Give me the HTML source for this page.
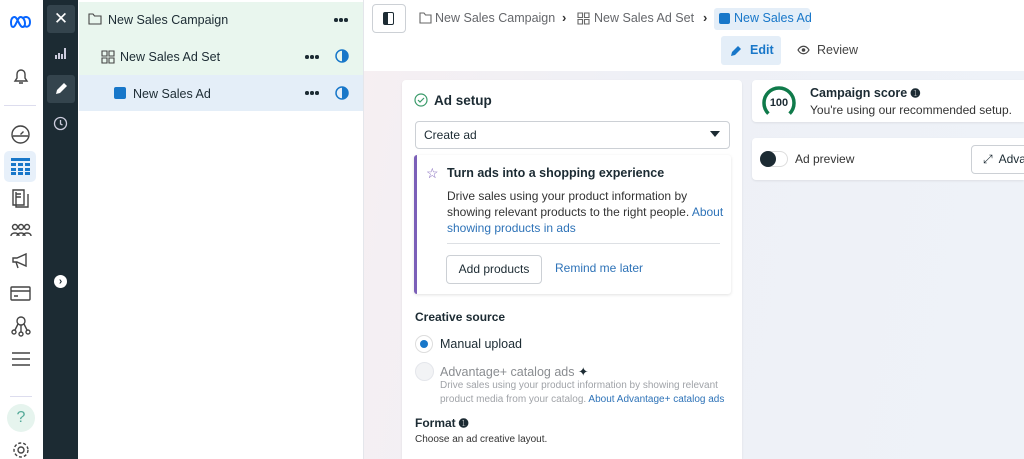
<!DOCTYPE html>
<html><head><meta charset="utf-8"><style>
*{box-sizing:border-box;margin:0;padding:0}
body{width:1024px;height:459px;overflow:hidden;font-family:"Liberation Sans",sans-serif;color:#1c2b33;background:#fff;position:relative;font-size:12px}
.abs{position:absolute}
.rail{left:0;top:0;width:43px;height:459px;background:#fff}
.dark{left:43px;top:0;width:35px;height:459px;background:#1c2b33}
.tree{left:78px;top:0;width:286px;height:459px;background:#fff;border-right:1px solid #e4e6eb}
.main{left:364px;top:0;width:660px;height:459px;background:linear-gradient(100deg,#f6eff2 0%,#eef0f6 40%,#eef2f8 100%)}
.hdr{left:364px;top:0;width:660px;height:71px;background:#fff}
.card{background:#fff;border-radius:4px;box-shadow:0 1px 2px rgba(0,0,0,.08)}
.link{color:#2e73b8}
.ico{stroke:#444;fill:none;stroke-width:1.4}
.dots{position:absolute;width:14px;height:4px}
.dots i{position:absolute;top:0;width:3.5px;height:3.5px;border-radius:50%;background:#1c2b33}
</style></head><body>
<div class="abs rail"></div>
<svg class="abs" style="left:9px;top:16px" width="24" height="12" viewBox="0 0 24 12"><path d="M2 6c0-3 1.5-5 3.5-5 3 0 5 10 8 10 2 0 2.5-2 2.5-3.5C16 4 14 1 11.5 1 8.5 1 7 11 4 11 2.5 11 2 9 2 6z" fill="none" stroke="#0866ff" stroke-width="2"/><path d="M14 2c3-2 7-1 7 4s-4 6-6 3" fill="none" stroke="#0866ff" stroke-width="2"/></svg>
<svg class="abs ico" style="left:11px;top:66px" width="20" height="20" viewBox="0 0 20 20"><path class="ico" d="M4 15h12l-2-3V8a4 4 0 0 0-8 0v4zM8 17h4"/></svg>
<div class="abs" style="left:4px;top:105px;width:32px;height:1px;background:#dde"></div>
<svg class="abs" style="left:10px;top:124px" width="21" height="21" viewBox="0 0 21 21"><circle class="ico" cx="10.5" cy="10.5" r="8.5"/><path class="ico" d="M3 12h15M10.5 10.5l3-3"/></svg>
<div class="abs" style="left:4px;top:151px;width:32px;height:31px;background:#e7f0fa;border-radius:5px"></div>
<svg class="abs" style="left:11px;top:158px" width="19" height="17" viewBox="0 0 19 17"><rect x="0" y="0" width="19" height="3" fill="#1877c9"/><path d="M0 5h5v3H0zM7 5h5v3H7zM14 5h5v3h-5zM0 10h5v3H0zM7 10h5v3H7zM14 10h5v3h-5zM0 14h5v3H0zM7 14h5v3H7zM14 14h5v3h-5z" fill="#1877c9"/></svg>
<svg class="abs" style="left:11px;top:188px" width="20" height="20"><path class="ico" d="M2 2h11v15H2zM5 4v15h12V6M5 6h5M5 9h5"/></svg>
<svg class="abs" style="left:10px;top:222px" width="22" height="16"><circle class="ico" cx="5" cy="5" r="2.5"/><circle class="ico" cx="11" cy="5" r="2.5"/><circle class="ico" cx="17" cy="5" r="2.5"/><path class="ico" d="M1 14c0-4 8-4 8 0M7 14c0-4 8-4 8 0M13 14c0-4 8-4 8 0"/></svg>
<svg class="abs" style="left:11px;top:252px" width="20" height="18"><path class="ico" d="M2 6h4l9-4v12L6 10H2zM5 10l2 6"/></svg>
<svg class="abs" style="left:10px;top:286px" width="21" height="16"><rect class="ico" x="1" y="1" width="19" height="13" rx="1"/><path class="ico" d="M1 5h19M4 10h4"/></svg>
<svg class="abs" style="left:10px;top:315px" width="22" height="22"><circle class="ico" cx="11" cy="6" r="4"/><circle class="ico" cx="4" cy="17" r="2"/><circle class="ico" cx="11" cy="19" r="2"/><circle class="ico" cx="18" cy="17" r="2"/><path class="ico" d="M11 10v7M8 9l-3 6M14 9l3 6"/></svg>
<svg class="abs" style="left:12px;top:352px" width="18" height="14"><path class="ico" d="M0 1h18M0 7h18M0 13h18"/></svg>
<div class="abs" style="left:10px;top:396px;width:22px;height:1px;background:#dde"></div>
<div class="abs" style="left:7px;top:404px;width:28px;height:28px;border-radius:50%;background:#e6f4ee;color:#5a9;text-align:center;line-height:28px;font-size:16px">?</div>
<svg class="abs" style="left:12px;top:441px" width="18" height="18"><circle class="ico" cx="9" cy="9" r="3"/><circle class="ico" cx="9" cy="9" r="7" stroke-dasharray="3 2"/></svg>

<div class="abs dark"></div>
<div class="abs" style="left:47px;top:5px;width:28px;height:28px;background:#34444d;border-radius:3px;color:#fff;text-align:center;line-height:28px;font-size:17px">✕</div>
<svg class="abs" style="left:55px;top:47px" width="13" height="12"><path d="M0 12V8h2v4M3 12V6h2v6M6 12V7h2v5M9 12V1h2v11" fill="#ccd"/></svg>
<div class="abs" style="left:47px;top:75px;width:28px;height:28px;background:#34444d;border-radius:3px"></div>
<svg class="abs" style="left:54px;top:82px" width="14" height="14"><path d="M2 12l1-4 7-7 3 3-7 7z" fill="#fff"/></svg>
<svg class="abs" style="left:53px;top:116px" width="15" height="15"><circle cx="7.5" cy="7.5" r="6" stroke="#ccd" fill="none" stroke-width="1.3"/><path d="M7.5 4v4l2 1" stroke="#ccd" fill="none" stroke-width="1.3"/></svg>
<div class="abs" style="left:54px;top:275px;width:13px;height:13px;border-radius:50%;background:#fff;color:#1c2b33;font-size:10px;line-height:13px;text-align:center;font-weight:bold">›</div>

<div class="abs tree"></div>
<div class="abs" style="left:79px;top:2px;width:284px;height:73px;background:#e9f6ee"></div>
<div class="abs" style="left:79px;top:75px;width:284px;height:36px;background:#e4eef8"></div>
<svg class="abs" style="left:88px;top:13px" width="14" height="12"><path d="M1 1h4l1.5 2H13v8H1z" fill="none" stroke="#444" stroke-width="1.1"/></svg>
<div class="abs" style="left:108px;top:13px;font-size:12.5px">New Sales Campaign</div>
<div class="dots" style="left:334px;top:18px"><i style="left:0"></i><i style="left:5px"></i><i style="left:10px"></i></div>
<svg class="abs" style="left:101px;top:50px" width="14" height="14"><path d="M1 1h5v5H1zM8 1h5v5H8zM1 8h5v5H1zM8 8h5v5H8z" fill="none" stroke="#444" stroke-width="1.1"/></svg>
<div class="abs" style="left:120px;top:50px;font-size:12.5px">New Sales Ad Set</div>
<div class="dots" style="left:305px;top:55px"><i style="left:0"></i><i style="left:5px"></i><i style="left:10px"></i></div>
<svg class="abs" style="left:335px;top:49px" width="14" height="14"><circle cx="7" cy="7" r="6" fill="none" stroke="#1877c9" stroke-width="1.5"/><path d="M7 1a6 6 0 0 1 0 12z" fill="#1877c9"/></svg>
<div class="abs" style="left:114px;top:87px;width:12px;height:12px;background:#1877c9;border-radius:2px"></div>
<div class="abs" style="left:133px;top:87px;font-size:12.5px">New Sales Ad</div>
<div class="dots" style="left:305px;top:91px"><i style="left:0"></i><i style="left:5px"></i><i style="left:10px"></i></div>
<svg class="abs" style="left:335px;top:86px" width="14" height="14"><circle cx="7" cy="7" r="6" fill="none" stroke="#1877c9" stroke-width="1.5"/><path d="M7 1a6 6 0 0 1 0 12z" fill="#1877c9"/></svg>

<div class="abs main"></div>
<div class="abs hdr"></div>
<div class="abs" style="left:372px;top:4px;width:34px;height:29px;border:1px solid #ccd0d5;border-radius:4px;background:#fff"></div>
<div class="abs" style="left:383px;top:12px;width:11px;height:13px;border:1.5px solid #1c2b33;border-left:5px solid #1c2b33;border-radius:2px"></div>
<svg class="abs" style="left:419px;top:12px" width="13" height="12"><path d="M1 1h4l1.5 2H12v8H1z" fill="none" stroke="#666" stroke-width="1.1"/></svg>
<div class="abs" style="left:435px;top:11px;font-size:12.5px;color:#65676b;white-space:nowrap">New Sales Campaign</div>
<div class="abs" style="left:562px;top:10px;font-size:13px;font-weight:bold;color:#333">›</div>
<svg class="abs" style="left:577px;top:12px" width="13" height="13"><path d="M1 1h4.5v4.5H1zM7.5 1H12v4.5H7.5zM1 7.5h4.5V12H1zM7.5 7.5H12V12H7.5z" fill="none" stroke="#666" stroke-width="1.1"/></svg>
<div class="abs" style="left:594px;top:11px;font-size:12.5px;color:#65676b;white-space:nowrap">New Sales Ad Set</div>
<div class="abs" style="left:703px;top:10px;font-size:13px;font-weight:bold;color:#333">›</div>
<div class="abs" style="left:714px;top:8px;width:96px;height:22px;background:#e4eef8;border-radius:3px"></div>
<div class="abs" style="left:719px;top:13px;width:11px;height:11px;background:#1877c9;border-radius:2px"></div>
<div class="abs" style="left:734px;top:11px;font-size:12.5px;color:#1877c9;white-space:nowrap">New Sales Ad</div>
<div class="abs" style="left:721px;top:36px;width:60px;height:29px;background:#e4eef8;border-radius:3px"></div>
<svg class="abs" style="left:730px;top:44px" width="13" height="13"><path d="M1 12l1-4 6-6 3 3-6 6z" fill="#1877c9"/></svg>
<div class="abs" style="left:750px;top:43px;font-size:12.5px;color:#1877c9;font-weight:bold">Edit</div>
<svg class="abs" style="left:797px;top:45px" width="13" height="10"><path d="M1 5c3-5 8-5 11 0-3 5-8 5-11 0z" fill="none" stroke="#444" stroke-width="1.2"/><circle cx="6.5" cy="5" r="1.8" fill="#444"/></svg>
<div class="abs" style="left:817px;top:43px;font-size:12.5px;color:#444">Review</div>

<div class="abs card" style="left:402px;top:80px;width:340px;height:379px;border-radius:4px 4px 0 0"></div>
<svg class="abs" style="left:414px;top:93px" width="14" height="14"><circle cx="7" cy="7" r="6" fill="none" stroke="#3a9a6a" stroke-width="1.2"/><path d="M4 7l2 2 4-4" fill="none" stroke="#3a9a6a" stroke-width="1.2"/></svg>
<div class="abs" style="left:434px;top:93px;font-size:13.5px;font-weight:bold">Ad setup</div>
<div class="abs" style="left:415px;top:121px;width:315px;height:28px;border:1px solid #ccd0d5;border-radius:4px"></div>
<div class="abs" style="left:424px;top:128px;font-size:12px">Create ad</div>
<div class="abs" style="left:710px;top:131px;width:0;height:0;border-left:5px solid transparent;border-right:5px solid transparent;border-top:6px solid #1c2b33"></div>
<div class="abs" style="left:414px;top:155px;width:317px;height:139px;background:#fff;border-left:3px solid #7b5fb8;border-radius:3px;box-shadow:0 1px 3px rgba(0,0,0,.12)"></div>
<div class="abs" style="left:426px;top:165px;font-size:14px;color:#7b5fb8">☆</div>
<div class="abs" style="left:447px;top:166px;font-size:12.5px;font-weight:bold">Turn ads into a shopping experience</div>
<div class="abs" style="left:447px;top:188px;width:280px;font-size:12px;line-height:16px;color:#333">Drive sales using your product information by showing relevant products to the right people. <span class="link">About showing products in ads</span></div>
<div class="abs" style="left:447px;top:243px;width:273px;height:1px;background:#dde0e4"></div>
<div class="abs" style="left:446px;top:255px;width:96px;height:29px;border:1px solid #ccd0d5;border-radius:4px;text-align:center;line-height:27px;font-size:12px">Add products</div>
<div class="abs link" style="left:555px;top:261px;font-size:12px">Remind me later</div>
<div class="abs" style="left:415px;top:310px;font-size:12px;font-weight:bold">Creative source</div>
<div class="abs" style="left:415px;top:335px;width:18px;height:18px;border-radius:50%;border:1px solid #ddd;background:#fff"></div>
<div class="abs" style="left:420px;top:340px;width:8px;height:8px;border-radius:50%;background:#1877c9"></div>
<div class="abs" style="left:440px;top:337px;font-size:12.5px">Manual upload</div>
<div class="abs" style="left:415px;top:362px;width:19px;height:19px;border-radius:50%;border:1px solid #e4e6eb;background:#f2f3f5"></div>
<div class="abs" style="left:440px;top:364px;font-size:12.5px;color:#8a8d91">Advantage+ catalog ads <span style="color:#1c2b33">✦</span></div>
<div class="abs" style="left:440px;top:379px;width:300px;font-size:10px;line-height:14px;color:#a0a3a8">Drive sales using your product information by showing relevant product media from your catalog. <span class="link">About Advantage+ catalog ads</span></div>
<div class="abs" style="left:415px;top:416px;font-size:12px;font-weight:bold">Format <span style="font-size:11px">➊</span></div>
<div class="abs" style="left:415px;top:434px;font-size:10px;color:#333">Choose an ad creative layout.</div>

<div class="abs card" style="left:752px;top:80px;width:272px;height:42px;border-radius:4px 0 0 4px"></div>
<svg class="abs" style="left:759px;top:84px" width="40" height="36"><path d="M9.4 29.6A15 15 0 1 1 30.6 29.6" fill="none" stroke="#0f7a4a" stroke-width="3.5"/></svg>
<div class="abs" style="left:768px;top:97px;width:22px;text-align:center;font-size:11px;font-weight:bold">100</div>
<div class="abs" style="left:810px;top:86px;font-size:12.5px;font-weight:bold">Campaign score <span style="font-size:11px">➊</span></div>
<div class="abs" style="left:810px;top:103px;font-size:12px;color:#333">You're using our recommended setup.</div>
<div class="abs card" style="left:752px;top:138px;width:272px;height:42px;border-radius:4px 0 0 4px"></div>
<div class="abs" style="left:760px;top:151px;width:28px;height:16px;border-radius:8px;border:1px solid #ddd;background:#fff"></div>
<div class="abs" style="left:760px;top:151px;width:16px;height:16px;border-radius:50%;background:#1c2b33"></div>
<div class="abs" style="left:795px;top:152px;font-size:12px;color:#333">Ad preview</div>
<div class="abs" style="left:971px;top:145px;width:60px;height:29px;border:1px solid #ccd0d5;border-radius:4px;background:#fff"></div>
<div class="abs" style="left:983px;top:152px;font-size:12px;white-space:nowrap">⤢&nbsp; Adva</div>
</body></html>
